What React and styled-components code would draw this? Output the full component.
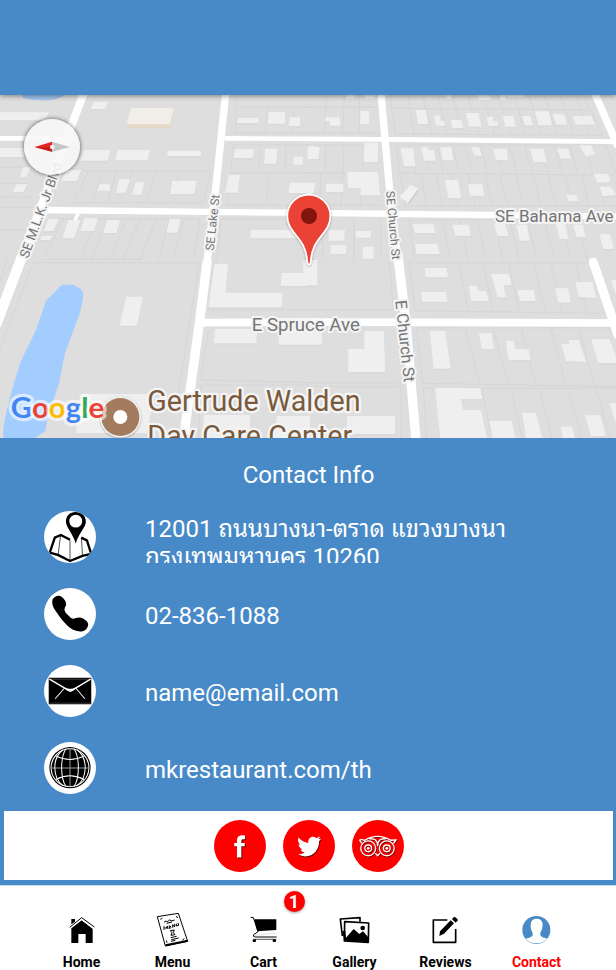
import React from "react";
import styled, { createGlobalStyle } from "styled-components";

const BLUE = "#488ac7";
const RED = "#ff0000";

const GlobalStyle = createGlobalStyle`
  * { box-sizing: border-box; }
  body {
    margin: 0;
    background: ${BLUE};
    font-family: Roboto, "Noto Sans", sans-serif;
  }
`;

const Page = styled.div`
  display: flex;
  flex-direction: column;
  min-height: 100vh;
  background: ${BLUE};
`;

const Header = styled.header`
  position: relative;
  flex: none;
  height: 95px;
  background: ${BLUE};
  box-shadow: 0 1px 5px rgba(0, 0, 0, 0.45);
  z-index: 1;
`;

const MapFrame = styled.section`
  position: relative;
  flex: none;
  overflow: hidden;
  background: #dedede;
`;

const MapDrawing = styled.svg`
  display: block;
  width: 100%;
  height: auto;
`;

const RoadLabel = styled.text`
  font-family: Roboto, sans-serif;
  font-size: ${(p) => p.$size}px;
  fill: #757575;
  stroke: #f4f4f4;
  stroke-width: 12px;
  stroke-linejoin: round;
  paint-order: stroke;
`;

const PlaceLabel = styled(RoadLabel)`
  fill: #7a5a3c;
  stroke-width: 14px;
`;

const Brand = styled.text`
  font-family: Lato, sans-serif;
  font-weight: 700;
  font-size: 88px;
`;

const CompassButton = styled.button`
  position: absolute;
  left: 24px;
  top: 24px;
  width: 56px;
  height: 56px;
  padding: 0;
  border: 0;
  border-radius: 50%;
  background: rgba(247, 247, 247, 0.9);
  box-shadow: 0 0 4px rgba(0, 0, 0, 0.65);
  cursor: pointer;

  svg { display: block; width: 100%; height: 100%; }
`;

const Info = styled.main`
  flex: none;
  padding: 22px 3px 5px 4px;
  color: #fff;
`;

const Title = styled.h1`
  margin: 0 0 21px;
  font-size: 24px;
  font-weight: 400;
  line-height: 30px;
  text-align: center;
`;

const ContactList = styled.ul`
  display: flex;
  flex-direction: column;
  gap: 25px;
  margin: 0 0 17px;
  padding: 0 16px 0 40px;
  list-style: none;
`;

const ContactRow = styled.li`
  display: flex;
  align-items: center;
  gap: 49px;
  font-size: 24px;
  line-height: 28px;
`;

const RoundIcon = styled.svg`
  flex: none;
  width: 52px;
  height: 52px;
  border-radius: 50%;
  background: ${(p) => p.$fill || "#fff"};
`;

const Address = styled.address`
  flex: 1;
  height: 52px;
  max-width: 400px;
  padding-top: 4px;
  overflow: hidden;
  font-family: Roboto, "Noto Sans Thai Looped", "Noto Looped Thai", "Droid Sans Thai", Loma, Garuda, Waree, "Noto Sans Thai", sans-serif;
  font-style: normal;
`;

const TextLink = styled.a`
  padding-top: 3px;
  color: inherit;
  text-decoration: none;
`;

const SocialBar = styled.nav`
  display: flex;
  justify-content: center;
  gap: 17px;
  padding: 9px 0 8px;
  background: #fff;
`;

const SocialLink = styled.a`
  display: flex;
`;

const TabBar = styled.nav`
  flex: 1;
  display: grid;
  grid-template-columns: repeat(6, 1fr);
  align-items: start;
  padding: 27px 34px 0 36px;
  border-top: 1px solid #c3daef;
  background: #fff;
`;

const Tab = styled.a`
  position: relative;
  display: flex;
  flex-direction: column;
  align-items: center;
  gap: 7px;
  color: ${(p) => (p.$active ? RED : "#000")};
  font-size: 14px;
  font-weight: 700;
  line-height: 16px;
  text-decoration: none;
`;

const TabIcon = styled.svg`
  width: 34px;
  height: 34px;
`;

const Badge = styled.span`
  position: absolute;
  top: -22px;
  left: calc(50% + 20px);
  width: 21px;
  height: 21px;
  border-radius: 50%;
  background: ${RED};
  box-shadow: 0 1px 3px rgba(0, 0, 0, 0.35);
  color: #fff;
  font-size: 18px;
  line-height: 21px;
  text-align: center;
`;

/* Map artwork: each quarter of the map keeps its own local coordinates. */
const QUARTERS = [
  {
    at: "translate(0 -45)",
    lots:
      "M0 121H135M0 232H90M0 262H90M0 310H85M0 352H95M0 383H115M0 450H75M245 274H632M225 368H610M265 274L222 365M307 274L278 366M350 274L322 366M400 274L360 366M468 274L440 366M538 274L520 366M632 274L610 366M20 100V122M85 98L75 122M42 205L30 230M710 45L706 160H930M714 82H930M803 82L797 160M880 82L876 160M702 195L692 278H930M702 195H930M783 195L776 278M858 195L856 278M690 282L680 376H865M805 282L800 376M175 416H600M190 416L130 540M290 416L240 540M322 416L275 540M380 416L330 540M420 416L368 540M468 416L420 540M508 416L475 540M552 416L520 540M600 416L580 540M665 416H855M665 416L650 540M140 538H420",
    buildings:
      "M0 97H147L136 121H0ZM0 204H90L72 231H0ZM282 66H324L316 87H273ZM252 210H332L322 242H240ZM354 210H451L442 241H345ZM501 212H603V228H503ZM198 270H244L231 303H184ZM300 313H330V332H292ZM358 298H391L376 338H348ZM407 307H433L424 344H396ZM517 303H590L583 342H510ZM50 313H82L70 336H38ZM69 262H92L80 292H60ZM715 114H775V129H711ZM806 96H855V131H803ZM869 112H900V138H866ZM704 208H763L758 234H699ZM796 206H831L829 251H792ZM882 230H908V254H880ZM925 198H945V238H922ZM686 285H720L714 338H676ZM870 308H930V339H865ZM145 418H176L160 453H132ZM205 420H242L222 475H188ZM253 415H294L282 453H242ZM321 421H360L349 459H309ZM509 416H541L533 458H499ZM754 450H930V475H750ZM125 468H158L150 480H120Z",
  },
  {
    at: "translate(918 -45)",
    lots:
      "M0 82H218M62 45L55 160M115 45L110 160M160 45V160M0 160H215M252 45L268 162L890 166L835 52M260 85L850 90M305 45L325 162M350 45L378 162M395 45L422 162M440 45L470 162M485 45L520 162M530 45L565 162M575 45L615 162M622 45L660 162M668 45L705 162M715 45L755 162M762 45L805 162M808 45L850 162M0 195H172M60 195L56 280M112 195V280M175 195L170 280M0 280H222M45 280L40 378M110 280L105 378M165 280V378M0 376H225M270 195L282 280L930 285M270 195H900L930 280M310 195L330 280M350 195L372 280M395 195L412 280M440 195L460 280M478 195L500 280M522 195L545 280M565 195L590 280M608 195L635 280M655 195L680 280M700 195L725 280M745 195L770 280M790 195L815 280M835 195L860 280M282 280L298 378H930M345 282L362 378M390 282L410 378M435 282L460 378M485 282L508 378M535 282L560 378M580 282L605 378M630 282L652 378M680 282L705 378M725 282L752 378M775 282L800 378M825 282L850 378M875 282L895 378M298 420H930M310 420L325 540M410 420L435 540M460 420L485 540M515 420L540 540M565 420L590 540M610 420L640 540M665 420L692 540M715 420L745 540M765 420L795 540M815 420L845 540M50 418V540M145 418V540M225 418V540",
    buildings:
      "M57 112H100L103 137H72L71 124H58ZM163 93H190V133H163ZM329 90H360L367 132H336ZM384 107H402L404 123H415L417 137H390ZM434 120H466L471 144H439ZM480 99H517L527 140H489ZM541 110H560L562 124H575L577 138H548ZM590 107H622L629 140H598ZM648 108H673L681 136H656ZM686 94H728L738 136H697ZM740 103H773L783 134H751ZM798 109H856L867 134H810ZM6 201H41L38 237H4ZM176 188H216L215 246H172ZM284 205H322L328 259H294ZM346 201H364L366 210H384L388 242H354ZM402 202H436L442 241H410ZM496 202H520L528 227H505ZM561 206H602L606 240H570ZM672 206H712L722 247H684ZM752 206H787L795 236H765ZM819 196H855L867 223L840 230ZM123 276H216L222 346H164V325H126ZM60 311H112V336H60ZM0 309H27L23 342H0ZM417 300H456L466 354H427ZM486 313H529L534 347H492ZM780 344H810L817 364H788ZM862 282H907L913 305L875 309ZM880 320H915L930 345L890 349ZM69 451H117L115 482H68ZM148 453H196L194 473H150ZM75 496H120V522H74ZM171 500H203V536H170ZM320 433H382L388 459H326ZM440 434H488L494 467H447ZM564 430H598L607 468H574ZM630 434H662L672 482H642ZM750 432H778L787 477H761ZM800 434H830L839 471H812ZM327 492H394L402 522H332ZM880 463H912L924 507H892ZM848 540Q860 530 872 540Z M121 45H145V56H121ZM177 45H205V56H177ZM420 45H435V57H422ZM515 45H550L554 60H519ZM580 45H597L600 60H585ZM605 45H650L654 53H608Z",
  },
  {
    at: "translate(0 495)",
    lots:
      "M100 8H598L535 400M100 8L0 265M42 0L0 65M20 0L0 62M642 0L625 150H930M625 212L602 360L930 368M602 375L596 540M600 375H930",
    buildings:
      "M379 110H429L411 197H359ZM643 12H684L677 98H848L845 142H625ZM845 39H910V0H952V78H842ZM645 207H772L769 250H641ZM838 205H966V254H836ZM245 402H465L440 520H228ZM612 465H750V540H605ZM830 468H930V540H825Z",
  },
  {
    at: "translate(918 495)",
    lots:
      "M250 0L262 150H0M308 0L327 152L905 160L860 20M312 8H860M457 8L487 152M532 12L562 154M608 12L640 154M683 12L718 155M735 12L768 155M810 12L842 156M332 204L350 370L930 380M332 204H930M478 206L522 373M560 206L608 374M646 206L690 375M735 206L780 376M818 206L865 377M0 368H270L285 380V540M0 380H282M352 385L362 540M352 385H930M527 388L560 540M615 388L650 540M700 388L740 540M785 388L830 540M870 388L915 540",
    buildings:
      "M0 0H34V76H0ZM356 24H421L427 52H359ZM345 96H420L424 125H349ZM488 78H512L518 93H540L548 123H496ZM555 42H608L617 76H592L600 112H575ZM634 90H684L689 123H643ZM748 85H786L794 128H757ZM808 66H860L870 114L818 111ZM915 60H930V105ZM175 213H233L238 336H127V267H175ZM371 213H418L434 326H383ZM519 220H557L564 267H527ZM599 242H623L629 268H668L674 300H608ZM766 252H790L788 240H818L840 306L780 303ZM855 237H910L930 290V309H877ZM387 384H523L528 417H465L471 450H525L543 534H403ZM550 483H617L630 540H560ZM647 458H690L710 540H662ZM763 500H798L808 540H772ZM837 466H882L900 528H855ZM910 430H930V490ZM123 468H267V522H123Z",
  },
];

function StreetMap() {
  return (
    <MapDrawing viewBox="0 0 1848 1029" role="img" aria-label="Map of the restaurant location">
      <defs>
        <filter id="pinShade" x="-30%" y="-30%" width="160%" height="160%">
          <feDropShadow dx="0" dy="2" stdDeviation="3" floodOpacity="0.35" />
        </filter>
      </defs>
      <rect width="1848" height="1029" fill="#dedede" />
      <path d="M68 0H195Q170 18 125 16Q85 14 68 8Z" fill="#a3c5f0" />
      <path
        d="M186 569H221L242 583Q252 590 249 604Q245 640 236 664L195 775Q185 820 178 860L140 980L136 1008L105 1029H10V1000Q20 930 62 800L108 705L138 617Z"
        fill="#a3cdff"
      />
      {QUARTERS.map((q) => (
        <g key={q.at} transform={q.at}>
          <path d={q.lots} fill="none" stroke="#d2d2d2" strokeWidth="2" />
          <path d={q.buildings} fill="#dadada" transform="translate(1 5)" />
          <path d={q.buildings} fill="#efefef" />
        </g>
      ))}
      <path d="M380 86L382 100H512L523 50L520 42Z" fill="#e5dac8" />
      <path d="M393 39H521L510 88H380Z" fill="#f1eeea" />
      <path d="M1199 305L1231 270L1255 281L1224 325Z" fill="#f1f1f1" />
      <path d="M1224 325L1255 281V287L1227 327Z" fill="#c9c9c9" />

      <g fill="none" stroke="#fff" strokeLinejoin="round">
        <path d="M0 130H230" strokeWidth="14" />
        <path d="M251 -5L62 495" strokeWidth="24" />
        <path d="M130 345L62 495L-12 690" strokeWidth="31" />
        <path d="M677 -5L650 255L622 495" strokeWidth="22" />
        <path d="M622 495L598 685L550 1035" strokeWidth="28" />
        <path d="M675 130L1148 133L1848 140" strokeWidth="14" />
        <path d="M120 345L860 353L1478 360L1848 365" strokeWidth="19" />
        <path d="M235 355L225 375" strokeWidth="10" />
        <path d="M1143 -5L1168 275L1193 495" strokeWidth="22" />
        <path d="M1193 475L1218 685L1248 1035" strokeWidth="28" />
        <path d="M600 683L918 681L1848 684" strokeWidth="23" />
        <path d="M1784 -5L1854 155" strokeWidth="22" />
        <path d="M1780 502L1854 720" strokeWidth="27" strokeLinecap="round" />
      </g>

      <RoadLabel $size={51} x="1485" y="382">SE Bahama Ave</RoadLabel>
      <RoadLabel $size={56} x="755" y="708">E Spruce Ave</RoadLabel>
      <RoadLabel $size={40} transform="translate(84 492) rotate(-70)">SE M.L.K. Jr Blvd</RoadLabel>
      <RoadLabel $size={36} transform="translate(641 468) rotate(-84)">SE Lake St</RoadLabel>
      <RoadLabel $size={36} transform="translate(1158 289) rotate(85)">SE Church St</RoadLabel>
      <RoadLabel $size={48} transform="translate(1186 617) rotate(84)">E Church St</RoadLabel>

      <PlaceLabel $size={86} x="442" y="949">Gertrude Walden</PlaceLabel>
      <PlaceLabel $size={86} x="442" y="1053">Day Care Center</PlaceLabel>

      <g filter="url(#pinShade)">
        <circle cx="361" cy="966" r="61" fill="#f3f3f3" />
        <circle cx="361" cy="966" r="57" fill="#a37b60" />
        <circle cx="361" cy="966" r="21" fill="#fff" />
      </g>

      <g stroke="#fff" strokeOpacity=".6" strokeWidth="20" strokeLinejoin="round" paintOrder="stroke">
        <Brand x="32" y="968">
          <tspan fill="#4285f4">G</tspan>
          <tspan fill="#ea4335">o</tspan>
          <tspan fill="#fbbc05">o</tspan>
          <tspan fill="#4285f4">g</tspan>
          <tspan fill="#34a853">l</tspan>
          <tspan fill="#ea4335">e</tspan>
        </Brand>
      </g>

      <g filter="url(#pinShade)">
        <path
          d="M926 299C890 299 862 328 862 363C862 417 918 425 922 500Q923 509 927 509Q931 509 932 500C936 425 991 417 991 363C991 328 962 299 926 299Z"
          fill="#ea4335"
          stroke="#fff"
          strokeWidth="5"
        />
        <circle cx="927" cy="363" r="24" fill="#811411" />
      </g>
    </MapDrawing>
  );
}

function Compass() {
  return (
    <CompassButton type="button" aria-label="Reset map rotation">
      <svg viewBox="70 116 168 168" aria-hidden="true">
        <path d="M154 184L208 200L154 214Z" fill="#c6c6c6" />
        <path d="M102 200L154 184V214Z" fill="#e8261f" />
        <path d="M102 200L154 200V214Z" fill="#c91c16" />
        <circle cx="155" cy="200" r="7" fill="#f0f0f0" />
      </svg>
    </CompassButton>
  );
}

function LocationIcon() {
  return (
    <RoundIcon viewBox="43 33 154 154" aria-hidden="true">
      <g fill="none" stroke="#000" strokeWidth="7" strokeLinejoin="round">
        <path d="M60 156L75 112L93 104L120 118M153 112L170 120L183 160L157 166L120 181L84 163L60 156" />
        <path d="M92 106L85 162M120 120V180M154 116L157 164" strokeWidth="2" />
      </g>
      <path
        fillRule="evenodd"
        d="M137 36C119 36 108 48 108 64C108 81 128 99 137 129C146 99 167 81 167 64C167 48 155 36 137 36ZM137 44A19 19 0 1 1 137 82A19 19 0 1 1 137 44Z"
      />
    </RoundIcon>
  );
}

function PhoneIcon() {
  return (
    <RoundIcon viewBox="43 265 154 154" aria-hidden="true">
      <path d="M68 300Q74 288 88 288Q97 289 107 305Q111 314 105 323Q101 330 107 338L123 354Q130 358 137 354Q149 350 160 356Q174 364 174 374Q172 388 158 393Q146 396 129 389C111 379 91 354 78 334Q64 316 68 300Z" />
    </RoundIcon>
  );
}

function MailIcon() {
  return (
    <RoundIcon viewBox="43 31 154 154" aria-hidden="true">
      <path d="M57 69H183V147H57Z" />
      <path d="M58 73H182M58 144H182" stroke="#bbb" strokeWidth="1" />
      <g fill="none" stroke="#fff" strokeWidth="4">
        <path d="M59 73L102 98L121 109L139 98L181 73" />
        <path d="M104 99L76 131M137 99L164 131" strokeWidth="3" />
        <path d="M103 99Q121 105 138 99Q121 119 103 99Z" fill="#fff" strokeWidth="1" />
      </g>
    </RoundIcon>
  );
}

function GlobeIcon() {
  return (
    <RoundIcon viewBox="43 263 154 154" aria-hidden="true">
      <circle cx="120" cy="339" r="61" />
      <g fill="none" stroke="#fff" strokeWidth="3">
        <circle cx="120" cy="339" r="56" />
        <path d="M120 282V398M62 340H178" stroke="#999" />
        <path d="M108 283C91 310 91 368 108 395M132 283C149 310 149 368 132 395M99 286C67 311 67 367 99 392M141 286C173 311 173 367 141 392" />
        <path d="M78 304Q120 326 162 304M78 374Q120 352 162 374" />
      </g>
    </RoundIcon>
  );
}

function FacebookIcon() {
  const letter = "M135 106V117H128Q124 117 124 122V128H134V138H124V171H111V138H103V128H111V119Q112 106 125 105Z";
  return (
    <RoundIcon $fill={RED} viewBox="43 60 154 154" aria-hidden="true">
      <path d={letter} fill="#600" transform="translate(3 3)" />
      <path d={letter} fill="#fff" />
    </RoundIcon>
  );
}

function TwitterIcon() {
  const bird =
    "M296 112Q308 126 325 128C323 114 334 107 343 110L349 113L361 109L355 117L363 115L357 123C357 147 341 168 316 168Q304 168 294 161Q306 162 314 156Q304 154 302 147H308Q297 143 296 132L302 134Q291 125 296 112Z";
  return (
    <RoundIcon $fill={RED} viewBox="250 60 154 154" aria-hidden="true">
      <path d={bird} fill="#600" transform="translate(2 3)" />
      <path d={bird} fill="#fff" />
    </RoundIcon>
  );
}

function OwlShape() {
  return (
    <>
      <path d="M478 119Q486 117 493 120Q532 97 571 120L586 119L579 129M478 119L485 129" />
      <circle cx="504" cy="144" r="22" />
      <circle cx="559" cy="144" r="22" />
      <circle cx="504" cy="144" r="10" />
      <circle cx="559" cy="144" r="10" />
      <path d="M506 116Q532 112 532 138Q532 112 557 116M525 158L532 166L539 158" />
    </>
  );
}

function TripadvisorIcon() {
  return (
    <RoundIcon $fill={RED} viewBox="456 60 154 154" aria-hidden="true">
      <g fill="none" stroke="#700" strokeWidth="4" transform="translate(2 3)">
        <OwlShape />
      </g>
      <g fill="none" stroke="#fff" strokeWidth="4">
        <OwlShape />
      </g>
      <circle cx="504" cy="144" r="4" fill="#fff" />
      <circle cx="559" cy="144" r="4" fill="#fff" />
    </RoundIcon>
  );
}

function HomeIcon() {
  return (
    <TabIcon viewBox="194 96 102 102" aria-hidden="true">
      <path d="M213 141L244 118L277 143V186H256V159H234V186H213Z" />
      <path d="M213 114H224V122L213 130Z" />
      <path d="M208 139L244 110L282 138" fill="none" stroke="#000" strokeWidth="3" />
      <path d="M212 141L244 116L278 142" fill="none" stroke="#fff" strokeWidth="3" />
    </TabIcon>
  );
}

function MenuIcon() {
  return (
    <TabIcon viewBox="468 96 102 102" aria-hidden="true">
      <g fill="none" stroke="#000" strokeWidth="3" strokeLinejoin="round">
        <path d="M472 107L535 97L563 181L496 195Z" fill="#fff" />
        <path d="M497 193L563 179" strokeWidth="6" />
        <path d="M481 115L487 112M529 105L533 111M553 173L547 177M501 185L499 178" />
        <path d="M492 124Q499 116 502 123Q510 112 513 120L524 117M500 127L516 123" />
        <path d="M492 147V137L498 143L502 135L504 144M508 133V142L514 140M508 137L513 136M518 140V131L524 138V129M529 128V135L536 133L534 126" />
        <path d="M511 149L523 147L520 155L525 161L513 163L516 155ZM512 170L530 166M514 176L536 171M513 181L526 178" />
      </g>
    </TabIcon>
  );
}

function CartIcon() {
  return (
    <TabIcon viewBox="141 96 102 102" aria-hidden="true">
      <path d="M163 115H229V147L172 151Z" />
      <path d="M152 109L160 110L174 152L161 161Q158 168 166 168H230" fill="none" stroke="#000" strokeWidth="3" />
      <path d="M160 175H229" stroke="#000" strokeWidth="2" />
      <path d="M163 164Q190 158 229 157" fill="none" stroke="#aaa" strokeWidth="1" />
      <rect x="158" y="175" width="10" height="8" rx="3" />
      <rect x="218" y="175" width="10" height="8" rx="3" />
    </TabIcon>
  );
}

function GalleryIcon() {
  return (
    <TabIcon viewBox="414 96 102 102" aria-hidden="true">
      <g fill="#fff" stroke="#000" strokeWidth="5" strokeLinejoin="round">
        <path d="M427 165L421 114L480 110V122" fill="none" />
        <path d="M434 122L506 126L505 184L433 180Z" />
      </g>
      <path d="M427 150L433 180L505 184L504 168L489 151L478 159L461 144L438 170L436 150Z" />
      <circle cx="488" cy="141" r="7" />
    </TabIcon>
  );
}

function ReviewsIcon() {
  return (
    <TabIcon viewBox="69 96 102 102" aria-hidden="true">
      <path d="M124 117H82V184H149V144" fill="none" stroke="#000" strokeWidth="5" strokeLinejoin="round" />
      <path d="M100 165L102 151L134 118L144 127L114 158ZM138 114L143 109Q147 107 151 111L156 117Q156 120 153 121L149 125Z" />
    </TabIcon>
  );
}

function ContactIcon() {
  return (
    <TabIcon viewBox="342 96 102 102" aria-hidden="true">
      <circle cx="391" cy="147" r="42" fill={BLUE} />
      <path
        d="M392 113Q409 113 410 130Q410 146 403 155V163Q406 170 425 173Q410 187 391 187Q371 187 359 173Q377 170 380 163V155Q373 146 374 130Q375 113 392 113Z"
        fill="#fff"
      />
    </TabIcon>
  );
}

const TABS = [
  { label: "Home", icon: HomeIcon },
  { label: "Menu", icon: MenuIcon },
  { label: "Cart", icon: CartIcon, count: 1 },
  { label: "Gallery", icon: GalleryIcon },
  { label: "Reviews", icon: ReviewsIcon },
  { label: "Contact", icon: ContactIcon, active: true },
];

export default function App() {
  return (
    <Page>
      <GlobalStyle />
      <Header />
      <MapFrame>
        <StreetMap />
        <Compass />
      </MapFrame>
      <Info>
        <Title>Contact Info</Title>
        <ContactList>
          <ContactRow>
            <LocationIcon />
            <Address lang="th">12001 ถนนบางนา-ตราด แขวงบางนา กรุงเทพมหานคร 10260</Address>
          </ContactRow>
          <ContactRow>
            <PhoneIcon />
            <TextLink href="tel:028361088">02-836-1088</TextLink>
          </ContactRow>
          <ContactRow>
            <MailIcon />
            <TextLink href="mailto:name@email.com">name@email.com</TextLink>
          </ContactRow>
          <ContactRow>
            <GlobeIcon />
            <TextLink href="#website">mkrestaurant.com/th</TextLink>
          </ContactRow>
        </ContactList>
        <SocialBar aria-label="Social media">
          <SocialLink href="#facebook" aria-label="Facebook"><FacebookIcon /></SocialLink>
          <SocialLink href="#twitter" aria-label="Twitter"><TwitterIcon /></SocialLink>
          <SocialLink href="#tripadvisor" aria-label="Tripadvisor"><TripadvisorIcon /></SocialLink>
        </SocialBar>
      </Info>
      <TabBar aria-label="Main">
        {TABS.map(({ label, icon: Icon, count, active }) => (
          <Tab key={label} href={`#${label.toLowerCase()}`} $active={active} aria-current={active ? "page" : undefined}>
            <Icon />
            {label}
            {count && <Badge>{count}</Badge>}
          </Tab>
        ))}
      </TabBar>
    </Page>
  );
}
